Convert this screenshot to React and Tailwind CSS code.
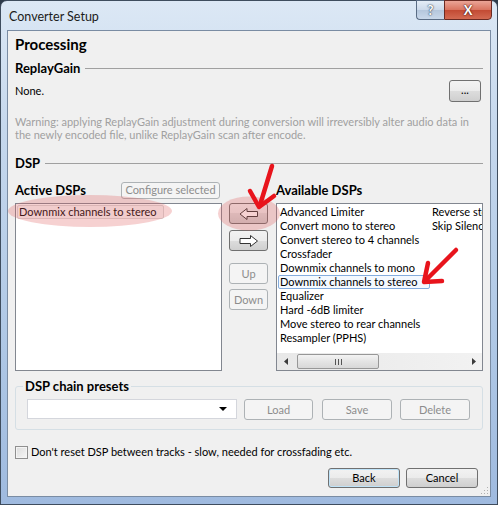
import React from "react";

const btn =
  "flex items-center justify-center whitespace-nowrap rounded-[3px] border border-[#707070] bg-[linear-gradient(#f2f2f2,#ebebeb_50%,#dddddd_50%,#cfcfcf)] text-black";
const btnOff =
  "flex items-center justify-center whitespace-nowrap rounded-[3px] border border-[#adb2b5] bg-[#f4f4f4] text-[#8d8d8d]";

const leftItems = [
  "Advanced Limiter",
  "Convert mono to stereo",
  "Convert stereo to 4 channels",
  "Crossfader",
  "Downmix channels to mono",
  "Downmix channels to stereo",
  "Equalizer",
  "Hard -6dB limiter",
  "Move stereo to rear channels",
  "Resampler (PPHS)",
];

function SectionHeader({ title }) {
  return (
    <div className="flex h-[24px] items-center gap-[5px]">
      <span className="text-[13px] font-bold">{title}</span>
      <div className="h-px flex-1 bg-[#a0a0a0]" />
    </div>
  );
}

function HollowArrow({ dir }) {
  const pts =
    dir === "left"
      ? "1,6 8,0.5 8,3.5 18.5,3.5 18.5,8.5 8,8.5 8,11.5"
      : "18.5,6 11.5,0.5 11.5,3.5 1,3.5 1,8.5 11.5,8.5 11.5,11.5";
  return (
    <svg width="20" height="12" viewBox="0 0 20 12">
      <polygon points={pts} fill="#fff" stroke="#333" strokeWidth="1" strokeLinejoin="miter" />
    </svg>
  );
}

export default function App() {
  return (
    <div className="relative h-[505px] w-[498px] overflow-hidden bg-[#2e3b4a] font-[Lato,sans-serif] text-[11px] leading-[14px] text-black">
      {/* window frame */}
      <div className="flex h-full w-full flex-col rounded-t-[7px] border border-[#3f4d5e] bg-[linear-gradient(180deg,#dce8f5_0%,#c6d8ed_25%,#aec7e5_70%,#9fbadf_100%)]">
        {/* title bar */}
        <div className="flex h-[29px] shrink-0 items-start justify-between">
          <span className="pl-[8px] pt-[8px] text-[12.5px] leading-[15px] text-[#1b1b1b]">
            Converter Setup
          </span>
          <div className="mr-[5px] flex h-[20px] -mt-px">
            <div className="flex w-[28px] items-center justify-center rounded-bl-[4px] border border-r-0 border-[#5a6c84] bg-[linear-gradient(#e4edf7,#cbd9ea_50%,#b4c6dc_50%,#c9d8ea)] text-[13px] font-bold text-white [text-shadow:0_0_2px_#2b3a4d,0_0_1px_#2b3a4d]">
              ?
            </div>
            <div className="flex w-[48px] items-center justify-center rounded-br-[4px] border border-[#6b2a22] bg-[linear-gradient(#eba597,#d9735f_50%,#c24a33_50%,#d36a52)] text-[13px] font-bold text-white [text-shadow:0_0_2px_#4a1410,0_0_1px_#4a1410]">
              X
            </div>
          </div>
        </div>

        {/* client area */}
        <div className="relative mx-[6px] mb-[7px] flex flex-1 flex-col border border-[#7a8ca3] bg-[#f0f0f0] px-[7px]">
          <div className="flex h-[25px] items-center text-[15px] font-bold">Processing</div>

          <SectionHeader title="ReplayGain" />

          <div className="flex h-[22px] items-center justify-between">
            <span>None.</span>
            <div className={`${btn} mr-[2px] h-[22px] w-[32px] pb-[3px]`}>...</div>
          </div>

          <div className="mt-[13px] whitespace-nowrap leading-[13px] text-[#a0a0a0]">
            Warning: applying ReplayGain adjustment during conversion will irreversibly alter audio data in
            <br />
            the newly encoded file, unlike ReplayGain scan after encode.
          </div>

          <div className="mt-[10px]">
            <SectionHeader title="DSP" />
          </div>

          {/* labels row */}
          <div className="mt-[5px] flex h-[20px] items-center">
            <div className="flex w-[207px] items-center justify-between">
              <span className="text-[13px] font-bold">Active DSPs</span>
              <div className={`${btnOff} mr-[2px] h-[17px] w-[99px]`}>Configure selected</div>
            </div>
            <div className="ml-[54px] text-[13px] font-bold">Available DSPs</div>
          </div>

          {/* lists row */}
          <div className="mt-[3px] flex h-[168px]">
            <div className="w-[207px] border border-[#828790] bg-white pt-px pl-px">
              <div className="w-[147px] whitespace-nowrap rounded-[2px] border border-[#d9d9d9] bg-[#f8f8f8] px-[1px] leading-[12px]">
                Downmix channels to stereo
              </div>
            </div>

            <div className="ml-[7px] flex w-[39px] flex-col">
              <div className={`${btn} h-[21px]`}>
                <HollowArrow dir="left" />
              </div>
              <div className={`${btn} mt-[6px] h-[21px]`}>
                <HollowArrow dir="right" />
              </div>
              <div className={`${btnOff} mt-[12px] h-[21px]`}>Up</div>
              <div className={`${btnOff} mt-[5px] h-[21px]`}>Down</div>
            </div>

            <div className="ml-[8px] flex w-[207px] flex-col overflow-hidden border border-[#828790] bg-white">
              <div className="flex flex-1 overflow-hidden whitespace-nowrap pt-px pl-px">
                <div className="w-[152px] shrink-0">
                  {leftItems.map((t) => (
                    <div
                      key={t}
                      className={
                        t === "Downmix channels to stereo"
                          ? "rounded-[2px] border border-[#84acdd] bg-[#f4f9ff] px-px leading-[12px]"
                          : "border border-transparent px-px leading-[12px]"
                      }
                    >
                      {t}
                    </div>
                  ))}
                </div>
                <div className="shrink-0">
                  <div className="border border-transparent px-px leading-[12px]">Reverse stereo</div>
                  <div className="border border-transparent px-px leading-[12px]">Skip Silence</div>
                </div>
              </div>
              {/* horizontal scrollbar */}
              <div className="flex h-[17px] shrink-0 items-center bg-[linear-gradient(90deg,#e8e8e8,#f2f2f2)]">
                <div className="flex h-full w-[17px] items-center justify-center">
                  <svg width="4" height="7" viewBox="0 0 4 7">
                    <polygon points="4,0 0,3.5 4,7" fill="#3c3c3c" />
                  </svg>
                </div>
                <div className="ml-[3px] flex h-[15px] w-[82px] items-center justify-center gap-[2px] rounded-[2px] border border-[#979797] bg-[linear-gradient(#f3f3f3,#e4e4e4_50%,#d8d8d8)]">
                  <div className="h-[6px] w-px bg-[#555]" />
                  <div className="h-[6px] w-px bg-[#555]" />
                  <div className="h-[6px] w-px bg-[#555]" />
                </div>
                <div className="flex-1" />
                <div className="flex h-full w-[17px] items-center justify-center">
                  <svg width="4" height="7" viewBox="0 0 4 7">
                    <polygon points="0,0 4,3.5 0,7" fill="#3c3c3c" />
                  </svg>
                </div>
              </div>
            </div>
          </div>

          {/* DSP chain presets group */}
          <div className="relative mt-[15px] flex h-[44px] items-start rounded-[3px] border border-[#d5dfe5] pl-[11px] pt-[12px]">
            <span className="absolute -top-[8px] left-[7px] bg-[#f0f0f0] px-[2px] text-[13px] font-bold leading-[14px]">
              DSP chain presets
            </span>
            <div className="flex h-[20px] w-[210px] items-center justify-end border border-[#d4d6dc] bg-white pr-[9px]">
              <svg width="8" height="4" viewBox="0 0 8 4">
                <polygon points="0,0 8,0 4,4" fill="#000" />
              </svg>
            </div>
            <div className={`${btnOff} ml-[7px] h-[21px] w-[69px]`}>Load</div>
            <div className={`${btnOff} ml-[9px] h-[21px] w-[70px]`}>Save</div>
            <div className={`${btnOff} ml-[8px] h-[21px] w-[70px]`}>Delete</div>
          </div>

          {/* checkbox */}
          <div className="mt-[15px] flex h-[14px] items-center gap-[3px]">
            <div className="h-[13px] w-[13px] border border-[#8f8f8f] bg-[linear-gradient(135deg,#dcdcdc,#f6f6f6)] shadow-[inset_0_0_0_1px_#f4f4f4]" />
            <span>Don't reset DSP between tracks - slow, needed for crossfading etc.</span>
          </div>

          {/* dialog buttons */}
          <div className="mt-[9px] flex justify-end gap-[6px] pr-[5px]">
            <div className={`${btn} h-[20px] w-[72px] border-[#3c7fb1] shadow-[inset_0_0_0_1px_#bfe3f8]`}>Back</div>
            <div className={`${btn} h-[20px] w-[72px]`}>Cancel</div>
          </div>

          {/* size grip */}
          <svg className="absolute bottom-[1px] right-[1px]" width="9" height="9" viewBox="0 0 9 9">
            <rect x="7" y="1" width="1" height="1" fill="#b0b0b0" />
            <rect x="4" y="4" width="1" height="1" fill="#b0b0b0" />
            <rect x="7" y="4" width="1" height="1" fill="#b0b0b0" />
            <rect x="1" y="7" width="1" height="1" fill="#b0b0b0" />
            <rect x="4" y="7" width="1" height="1" fill="#b0b0b0" />
            <rect x="7" y="7" width="1" height="1" fill="#b0b0b0" />
          </svg>
        </div>
      </div>

      {/* annotation overlay: highlights and red arrows */}
      <svg className="pointer-events-none absolute inset-0" width="498" height="505" viewBox="0 0 498 505">
        <ellipse cx="90" cy="211" rx="82" ry="16" fill="#e05a5a" fillOpacity="0.28" />
        <ellipse cx="249" cy="213.5" rx="31" ry="17" fill="#e05a5a" fillOpacity="0.28" />
        <g stroke="#e8141c" strokeWidth="4.5" strokeLinecap="round" strokeLinejoin="round" fill="none">
          <line x1="272" y1="166" x2="260" y2="205" />
          <polyline points="250,191 259,207 274,196" />
          <line x1="456" y1="250" x2="426" y2="280" />
          <polyline points="428,263 424,282 442,281" />
        </g>
      </svg>
    </div>
  );
}
